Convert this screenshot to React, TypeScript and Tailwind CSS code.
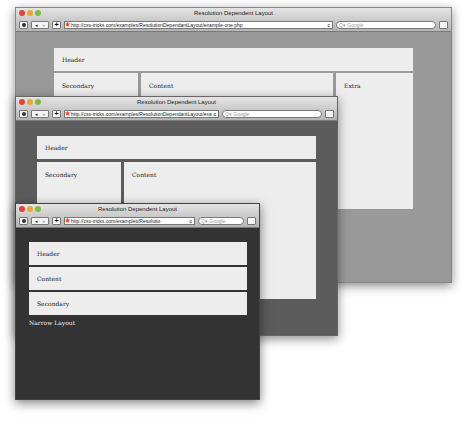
import React from "react";

const serif = { fontFamily: '"DejaVu Serif", "Liberation Serif", serif' };
const sans = { fontFamily: '"Liberation Sans", Arial, sans-serif' };

function Chrome({ url, w }: { url: string; w: number }) {
  return (
    <div className="bg-gradient-to-b from-[#e4e4e4] to-[#b4b4b4] border-b border-[#7a7a7a]" style={sans}>
      <div className="relative h-[10px] flex items-center">
        <div className="flex gap-[2px] pl-[3px] items-center">
          <span className="w-[6px] h-[6px] rounded-full bg-[#e2433a]" />
          <span className="w-[6px] h-[6px] rounded-full bg-[#e9a832]" />
          <span className="w-[6px] h-[6px] rounded-full bg-[#7ebd43]" />
        </div>
        <div className="absolute inset-0 text-center text-[6px] leading-[10px] text-[#222]">Resolution Dependent Layout</div>
      </div>
      <div className="h-[13px] flex items-center gap-[3px] px-[3px]">
        <span className="w-[9px] h-[8px] rounded-[1px] bg-[#f4f4f4] border border-[#777] flex items-center justify-center"><span className="w-[4px] h-[4px] rounded-full bg-[#333]" /></span>
        <span className="w-[18px] h-[8px] rounded-[1px] bg-[#f4f4f4] border border-[#777] flex text-[5px] leading-[6px] text-[#333] justify-around">◂<span className="text-[#aaa]">▸</span></span>
        <span className="w-[9px] h-[8px] rounded-[1px] bg-[#f4f4f4] border border-[#777] text-[7px] leading-[6px] text-center font-bold">+</span>
        <div className="flex-1 h-[8px] bg-white border border-[#777] flex items-center overflow-hidden relative">
          <span className="text-[#f04a1d] text-[8px] leading-[6px] -ml-[1px]">★</span>
          <span className="text-[5px] leading-[6px] whitespace-nowrap text-[#222]">{url}</span>
          <span className="absolute right-[2px] bg-white text-[5px] leading-[6px] pl-[1px]">c</span>
        </div>
        <div className={`${w > 300 ? "w-[100px]" : "w-[46px]"} h-[8px] bg-white border border-[#777] rounded-full text-[5px] leading-[6px] text-[#999] pl-[2px]`}>Q▾ Google</div>
        <span className="w-[9px] h-[8px] rounded-[1px] bg-[#f4f4f4] border border-[#777]" />
      </div>
    </div>
  );
}

const box = "bg-[#ededed] text-[6px] text-[#222] px-[8px]";

export default function App() {
  return (
    <div className="relative w-[467px] h-[436px] bg-white overflow-hidden" style={serif}>
      {/* window 1 */}
      <div className="absolute left-[15px] top-[7px] w-[437px] h-[276px] flex flex-col border border-[#888] shadow-[0_3px_10px_rgba(0,0,0,0.45)]">
        <Chrome url="http://css-tricks.com/examples/ResolutionDependantLayout/example-one.php" w={437} />
        <div className="flex-1 bg-[#999] pl-[38px] pt-[16px] w-full">
          <div className="w-[359px]">
            <div className={`${box} h-[23px] flex items-center`}>Header</div>
            <div className="flex gap-[3px] mt-[2px]">
              <div className={`${box} w-[84px] h-[140px] pt-[8px]`}>Secondary</div>
              <div className={`${box} w-[192px] h-[140px] pt-[8px]`}>Content</div>
              <div className={`${box} w-[77px] h-[136px] pt-[8px]`}>Extra</div>
            </div>
          </div>
        </div>
      </div>
      {/* window 2 */}
      <div className="absolute left-[15px] top-[96px] w-[323px] h-[240px] flex flex-col border border-[#666] shadow-[0_3px_10px_rgba(0,0,0,0.45)]">
        <Chrome url="http://css-tricks.com/examples/ResolutionDependantLayout/exa" w={323} />
        <div className="flex-1 bg-[#5c5c5c] pl-[21px] pt-[15px]">
          <div className="w-[279px]">
            <div className={`${box} h-[23px] flex items-center`}>Header</div>
            <div className="flex gap-[3px] mt-[3px]">
              <div className={`${box} w-[84px] h-[137px] pt-[8px]`}>Secondary</div>
              <div className={`${box} w-[192px] h-[137px] pt-[8px]`}>Content</div>
            </div>
          </div>
        </div>
      </div>
      {/* window 3 */}
      <div className="absolute left-[15px] top-[203px] w-[245px] h-[197px] flex flex-col border border-[#444] shadow-[0_3px_10px_rgba(0,0,0,0.5)]">
        <Chrome url="http://css-tricks.com/examples/Resolutio" w={245} />
        <div className="flex-1 bg-[#333] pl-[13px] pt-[14px]">
          <div className="w-[218px] flex flex-col gap-[2px]">
            <div className={`${box} h-[23px] flex items-center`}>Header</div>
            <div className={`${box} h-[23px] flex items-center`}>Content</div>
            <div className={`${box} h-[23px] flex items-center`}>Secondary</div>
          </div>
          <div className="text-[6px] text-[#eee] mt-[3px]">Narrow Layout</div>
        </div>
      </div>
    </div>
  );
}
